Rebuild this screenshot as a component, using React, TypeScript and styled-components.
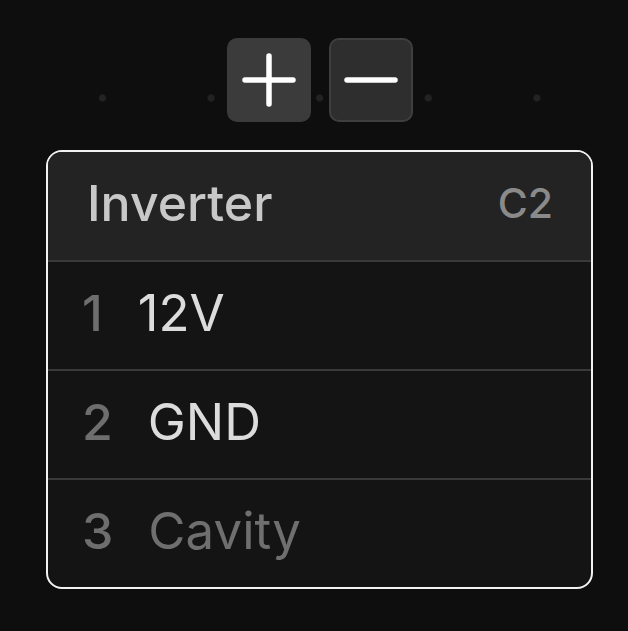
import React from "react";
import styled, { createGlobalStyle } from "styled-components";

const Global = createGlobalStyle`
  html, body {
    margin: 0;
    padding: 0;
    background-color: #0e0e0e;
    background-image: radial-gradient(circle at center, #232323 0, #232323 3.2px, transparent 3.8px);
    background-size: 108.6px 108.6px;
    background-position: 48.2px 43.7px;
    min-height: 100vh;
    font-family: Inter, "Noto Sans", sans-serif;
  }
`;

const Page = styled.div`
  display: flex;
  flex-direction: column;
  align-items: center;
  gap: 28px;
  padding: 38px 35px 0 46px;
`;

const Toolbar = styled.div`
  display: flex;
  gap: 18px;
`;

const ToolButton = styled.button<{ $active?: boolean }>`
  width: 84px;
  height: 84px;
  box-sizing: border-box;
  border-radius: 10px;
  border: 2px solid ${(p) => (p.$active ? "#3b3b3b" : "#3f3f3f")};
  background: ${(p) => (p.$active ? "#3b3b3b" : "#2e2e2e")};
  display: flex;
  align-items: center;
  justify-content: center;
  padding: 0;
  cursor: pointer;
`;

const Card = styled.div`
  width: 100%;
  box-sizing: border-box;
  border: 2px solid #f2f2f2;
  border-radius: 16px;
  overflow: hidden;
  background: #141414;
`;

const Header = styled.div`
  height: 108px;
  box-sizing: border-box;
  background: #232323;
  display: flex;
  align-items: center;
  justify-content: space-between;
  padding: 0 38px 6px 39px;
`;

const Title = styled.div`
  font-size: 50px;
  color: #c8c8c8;
  font-weight: 500;
`;

const Code = styled.div`
  font-size: 41px;
  color: #8a8a8a;
  font-weight: 500;
`;

const Row = styled.div`
  height: 107px;
  box-sizing: content-box;
  border-top: 2px solid #3a3a3a;
  display: flex;
  align-items: center;
  padding-left: 34px;
  gap: 35px;
  font-size: 50px;
  & > * {
    margin-bottom: 6px;
  }
`;

const Num = styled.span`
  color: #6e6e6e;
  font-weight: 500;
`;

const Label = styled.span<{ $muted?: boolean }>`
  font-size: 51px;
  color: ${(p) => (p.$muted ? "#6f6f6f" : "#dcdcdc")};
`;

const pins = [
  { n: 1, label: "12V" },
  { n: 2, label: "GND" },
  { n: 3, label: "Cavity", muted: true },
];

export default function App() {
  return (
    <>
      <Global />
      <Page>
        <Toolbar>
          <ToolButton $active aria-label="zoom in">
            <svg width="54" height="54" viewBox="0 0 54 54">
              <path d="M27 3V51M3 27H51" stroke="#fff" strokeWidth="5.5" strokeLinecap="round" />
            </svg>
          </ToolButton>
          <ToolButton aria-label="zoom out">
            <svg width="54" height="54" viewBox="0 0 54 54">
              <path d="M3 27H51" stroke="#fff" strokeWidth="5.5" strokeLinecap="round" />
            </svg>
          </ToolButton>
        </Toolbar>
        <Card>
          <Header>
            <Title>Inverter</Title>
            <Code>C2</Code>
          </Header>
          {pins.map((p) => (
            <Row key={p.n}>
              <Num>{p.n}</Num>
              <Label $muted={p.muted}>{p.label}</Label>
            </Row>
          ))}
        </Card>
      </Page>
    </>
  );
}
